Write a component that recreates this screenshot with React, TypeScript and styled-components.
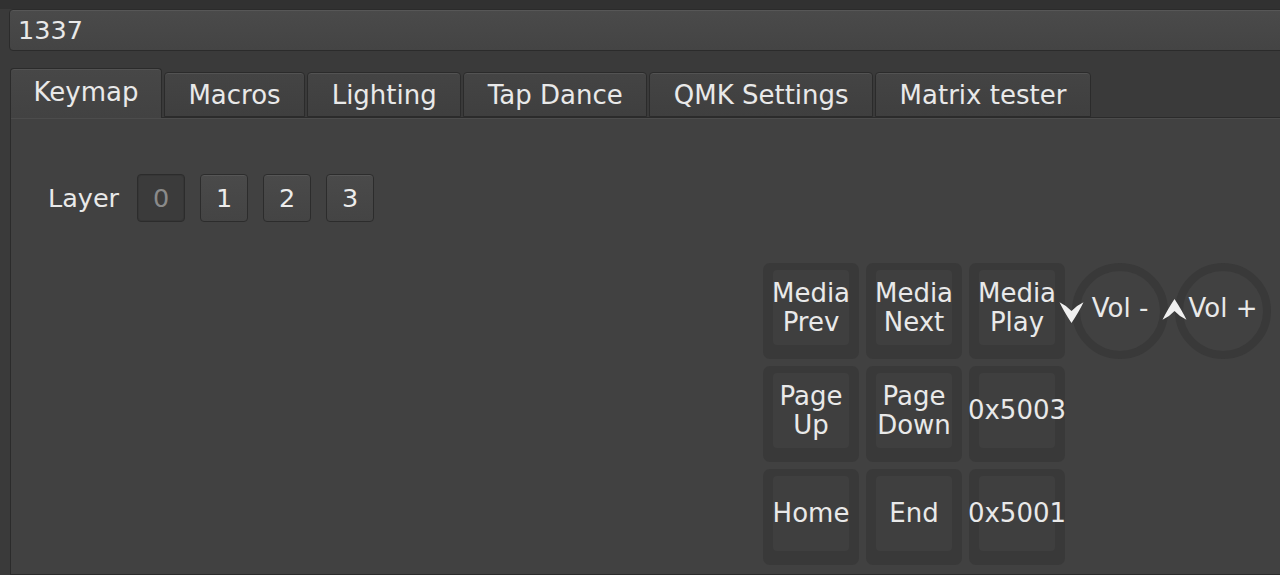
import React from "react";
import styled, { createGlobalStyle } from "styled-components";

const GlobalStyle = createGlobalStyle`
  html, body {
    margin: 0;
    padding: 0;
    height: 100%;
    overflow: hidden;
  }
  body {
    background: linear-gradient(#313131 0, #313131 9px, #3a3a3a 9px);
    font-family: "DejaVu Sans", "Liberation Sans", sans-serif;
    color: #e9e9e9;
  }
  #root { height: 100%; }
`;

const Window = styled.div`
  display: flex;
  flex-direction: column;
  height: 100%;
  padding-top: 9px;
  box-sizing: border-box;
`;

const DeviceBox = styled.div`
  margin-left: 9px;
  margin-right: -20px;
  height: 42px;
  box-sizing: border-box;
  border: 1px solid #2b2b2b;
  border-radius: 4px;
  background: linear-gradient(#4a4a4a, #444444);
  box-shadow: inset 0 1px 0 #575757;
  display: flex;
  align-items: center;
  padding-left: 8px;
  font-size: 25.5px;
`;

const TabBar = styled.div`
  display: flex;
  align-items: flex-end;
  gap: 2px;
  margin-top: 17px;
  margin-left: 10px;
  position: relative;
  z-index: 1;
`;

const Tab = styled.div<{ $active?: boolean }>`
  height: ${(p) => (p.$active ? 50 : 45)}px;
  box-sizing: border-box;
  padding: 0 ${(p) => (p.$active ? 22.5 : 23.5)}px;
  display: flex;
  align-items: center;
  font-size: 26px;
  border: 1px solid #2b2b2b;
  border-bottom: ${(p) => (p.$active ? "none" : "1px solid #2b2b2b")};
  border-radius: 4px 4px 0 0;
  background: ${(p) =>
    p.$active
      ? "linear-gradient(#474747, #424242)"
      : "linear-gradient(#444444, #3f3f3f)"};
  box-shadow: inset 0 1px 0 #535353;
  padding-bottom: ${(p) => (p.$active ? 3 : 0)}px;
  margin-bottom: ${(p) => (p.$active ? -1 : 0)}px;
`;

const Pane = styled.div`
  flex: 1;
  margin-left: 10px;
  margin-right: -20px;
  border: 1px solid #2b2b2b;
  box-shadow: inset 0 1px 0 #4c4c4c;
  background: #414141;
  display: flex;
  flex-direction: column;
  padding-top: 56px;
`;

const LayerRow = styled.div`
  display: flex;
  align-items: center;
  gap: 15px;
  padding-left: 37px;
`;

const LayerLabel = styled.span`
  font-size: 25.5px;
  margin-right: 3px;
`;

const LayerButton = styled.div<{ $selected?: boolean }>`
  width: 48px;
  height: 48px;
  box-sizing: border-box;
  display: flex;
  align-items: center;
  justify-content: center;
  font-size: 25.5px;
  border: 1px solid #2c2c2c;
  border-radius: 4px;
  color: ${(p) => (p.$selected ? "#8a8a8a" : "#ececec")};
  background: ${(p) =>
    p.$selected ? "#3b3b3b" : "linear-gradient(#4a4a4a, #444444)"};
  box-shadow: ${(p) =>
    p.$selected ? "inset 0 0 0 1px #363636" : "inset 0 1px 0 #565656"};
`;

const Keyboard = styled.div`
  margin-top: 41px;
  margin-left: 752px;
  display: grid;
  grid-template-columns: repeat(5, 96px);
  grid-auto-rows: 96px;
  gap: 7px;
`;

const KeyCap = styled.div`
  background: #393939;
  border-radius: 7px;
  padding: 7px 10px 14px 10px;
  box-sizing: border-box;
  display: flex;
`;

const KeyFace = styled.div`
  flex: 1;
  background: #3f3f3f;
  border-radius: 4px;
  display: flex;
  align-items: center;
  justify-content: center;
  overflow: visible;
`;

const KeyLabel = styled.span`
  flex-shrink: 0;
  margin: 0 -14px;
  text-align: center;
  white-space: pre-line;
  font-size: 26px;
  line-height: 29px;
`;

const Encoder = styled.div`
  position: relative;
  width: 96px;
  height: 96px;
  box-sizing: border-box;
  border: 8px solid #393939;
  border-radius: 50%;
  display: flex;
  align-items: center;
  justify-content: center;
  font-size: 26px;
  white-space: nowrap;
  padding-bottom: 6px;
`;

const EncoderArrow = styled.svg`
  position: absolute;
  left: -21px;
  top: 50%;
  transform: translateY(-50%);
  width: 25px;
  height: 25px;
`;

const tabs = ["Keymap", "Macros", "Lighting", "Tap Dance", "QMK Settings", "Matrix tester"];

const keys = [
  ["Media\nPrev", "Media\nNext", "Media\nPlay"],
  ["Page\nUp", "Page\nDown", "0x5003"],
  ["Home", "End", "0x5001"],
];

function Arrow({ up }: { up?: boolean }) {
  return (
    <EncoderArrow viewBox="0 0 24 24">
      <path
        d="M0.5 3.5 Q7 6.5 12 12 Q17 6.5 23.5 3.5 Q19.5 12 12 23.5 Q4.5 12 0.5 3.5 Z"
        fill="#f0f0f0"
        transform={up ? "rotate(180 12 12)" : undefined}
      />
    </EncoderArrow>
  );
}

export default function App() {
  return (
    <>
      <GlobalStyle />
      <Window>
        <DeviceBox>1337</DeviceBox>
        <TabBar>
          {tabs.map((t, i) => (
            <Tab key={t} $active={i === 0}>
              {t}
            </Tab>
          ))}
        </TabBar>
        <Pane>
          <LayerRow>
            <LayerLabel>Layer</LayerLabel>
            {[0, 1, 2, 3].map((n) => (
              <LayerButton key={n} $selected={n === 0}>
                {n}
              </LayerButton>
            ))}
          </LayerRow>
          <Keyboard>
            {keys[0].map((k) => (
              <KeyCap key={k}>
                <KeyFace>
                  <KeyLabel>{k}</KeyLabel>
                </KeyFace>
              </KeyCap>
            ))}
            <Encoder>
              <Arrow />
              Vol -
            </Encoder>
            <Encoder>
              <Arrow up />
              Vol +
            </Encoder>
            {keys.slice(1).map((row, ri) => (
              <React.Fragment key={ri}>
                {row.map((k) => (
                  <KeyCap key={k}>
                    <KeyFace>
                      <KeyLabel>{k}</KeyLabel>
                    </KeyFace>
                  </KeyCap>
                ))}
                <span />
                <span />
              </React.Fragment>
            ))}
          </Keyboard>
        </Pane>
      </Window>
    </>
  );
}
